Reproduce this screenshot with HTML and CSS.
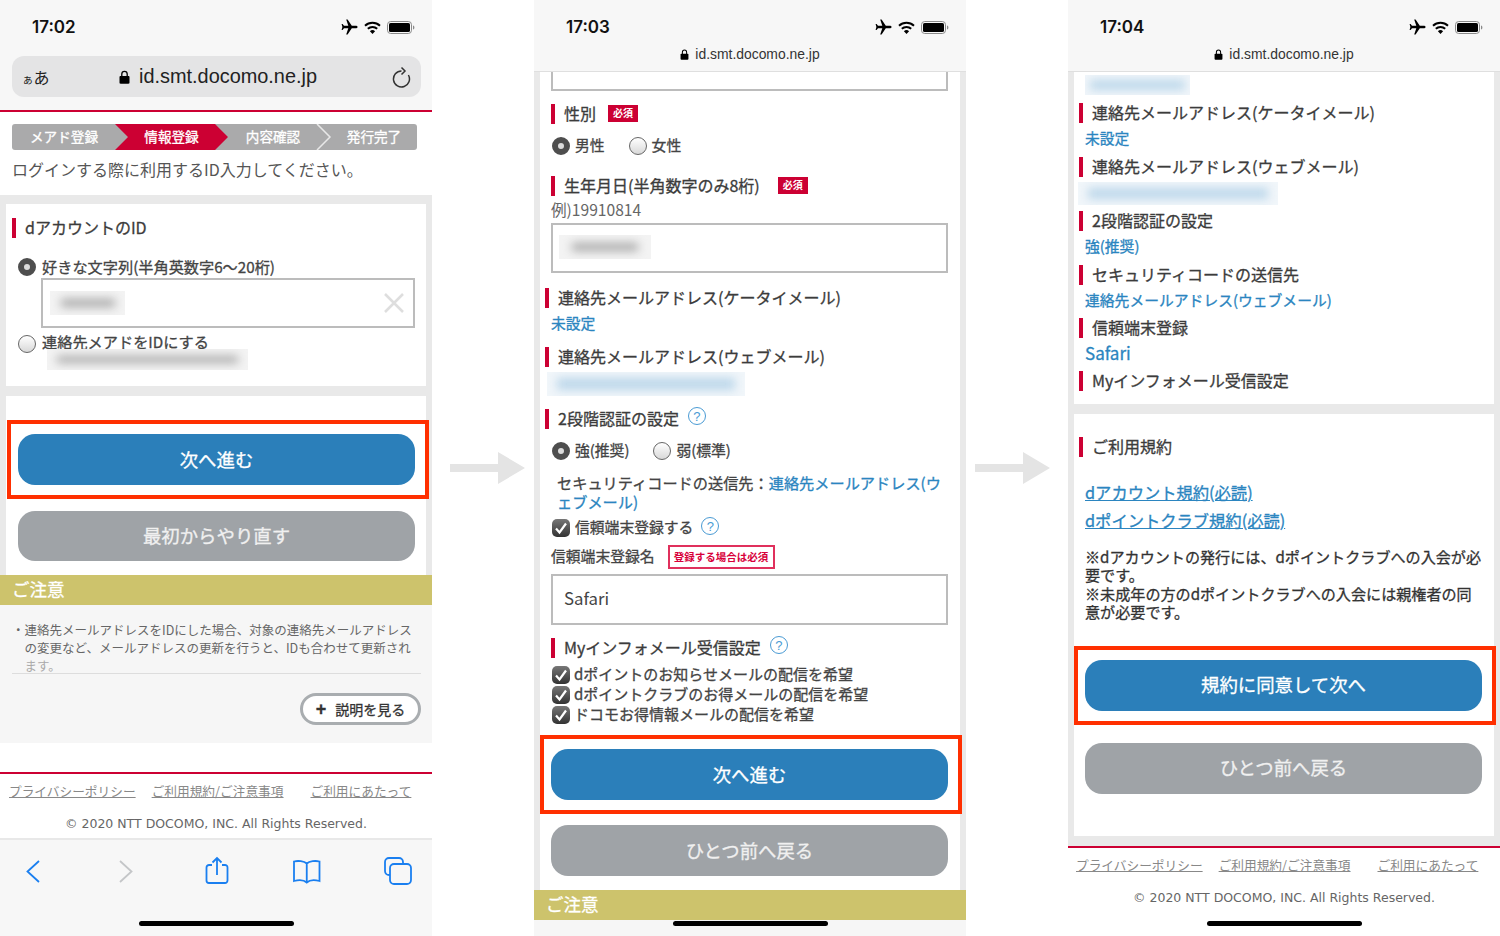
FILE: index.html
```html
<!DOCTYPE html>
<html lang="ja">
<head>
<meta charset="utf-8">
<title>dアカウント発行手順</title>
<link rel="stylesheet" href="styles.css">
</head>
<body>
<svg class="sprite" aria-hidden="true">
  <symbol id="plane" viewBox="0 0 17 16"><path d="M16.6 8c0-.8-1-1.3-2-1.3h-3.8L6.6.4H5.2l2.1 6.3H3L1.6 5H.6l.8 3-.8 3h1L3 9.3h4.3L5.2 15.6h1.4l4.2-6.3h3.8c1 0 2-.5 2-1.3z"/></symbol>
  <symbol id="wifi" viewBox="0 0 17 13"><path class="sw" d="M1 4.800a11 11 0 0 1 15 0"/><path class="sw" d="M3.800 7.800a7 7 0 0 1 9.400 0"/><path d="M8.500 13 5.900 10.200a3.800 3.800 0 0 1 5.200 0z"/></symbol>
  <symbol id="batt" viewBox="0 0 28 13"><rect class="bo" x=".5" y=".5" width="24" height="12" rx="3.200"/><rect x="2" y="2" width="21" height="9" rx="1.600"/><path class="bn" d="M26 4.500c1 .3 1.400 1 1.400 2s-.4 1.700-1.400 2z"/></symbol>
  <symbol id="lock" viewBox="0 0 11 14"><path d="M1.600 6h7.800c.7 0 1.100.4 1.100 1.100v5.400c0 .8-.4 1.200-1.100 1.200H1.600c-.7 0-1.100-.4-1.100-1.200V7.100C.5 6.400.9 6 1.600 6z"/><path class="lk" d="M2.800 6.500V4a2.700 2.700 0 0 1 5.400 0v2.500"/></symbol>
  <symbol id="tick" viewBox="0 0 18 18"><path class="tk" d="M4 9.500l3.500 4L14 4.500"/></symbol>
</svg>

<main class="stage">

  <section class="phone">
    <header class="chrome chrome-tall">
      <div class="status"><span class="time">17:02</span><span class="sicons"><svg class="i-plane"><use href="#plane"/></svg><svg class="i-wifi"><use href="#wifi"/></svg><svg class="i-batt"><use href="#batt"/></svg></span></div>
      <div class="urlbar">
        <span class="aa"><small>ぁ</small>あ</span>
        <span class="url"><svg class="i-lock-l"><use href="#lock"/></svg>id.smt.docomo.ne.jp</span>
        <svg class="i-reload" viewBox="0 0 20 22"><path d="M16.400 9A8 8 0 1 1 9.500 5"/><path d="M9.500 1.500 13 5 9.500 8.500"/></svg>
      </div>
    </header>
    <div class="steps">
      <svg class="steps-bg" viewBox="0 0 405 26"><path class="st-red" d="M103 0h100l13 13-13 13H103l13-13z"/><path class="st-sep" d="M305 0l13 13-13 13"/></svg>
      <span class="st st1">メアド登録</span><span class="st st2">情報登録</span><span class="st st3">内容確認</span><span class="st st4">発行完了</span>
    </div>
    <p class="intro">ログインする際に利用するID入力してください。</p>
    <div class="graybg gb1">
      <div class="card c1a">
        <h2 class="h mt-11">dアカウントのID</h2>
        <div class="rad mt-15"><i class="radio on"></i><span>好きな文字列(半角英数字6〜20桁)</span></div>
        <div class="input in1"><div class="blur b1"><i></i></div><svg class="i-x" viewBox="0 0 20 20"><path d="M1 1l18 18M19 1L1 19"/></svg></div>
        <div class="rad mt-5 rad2"><i class="radio"></i><span>連絡先メアドをIDにする</span></div>
        <div class="blur b2"><i></i></div>
      </div>
      <div class="card c1b">
        <div class="hl hl1"><a class="btn blue">次へ進む</a></div>
        <a class="btn grey g1">最初からやり直す</a>
      </div>
    </div>
    <div class="gold">ご注意</div>
    <div class="notice">
      <p class="ntext">・連絡先メールアドレスをIDにした場合、対象の連絡先メールアドレス<br>の変更など、メールアドレスの更新を行うと、IDも合わせて更新され<br><span class="fade">ます。</span></p>
      <div class="more-wrap"><a class="more"><b>+</b>説明を見る</a></div>
    </div>
    <div class="spacer29"></div>
    <footer class="foot foot-b">
      <div class="links"><a>プライバシーポリシー</a><a class="l2">ご利用規約/ご注意事項</a><a class="l3">ご利用にあたって</a></div>
      <p class="copy">© 2020 NTT DOCOMO, INC. All Rights Reserved.</p>
    </footer>
    <nav class="toolbar">
      <div class="tools">
        <svg viewBox="0 0 24 32"><path d="M18 6 6.500 16.500 18 27"/></svg>
        <svg class="off" viewBox="0 0 24 32"><path d="M8 6l11.500 10.500L8 27"/></svg>
        <svg viewBox="0 0 24 32"><path d="M8 10H5a2.500 2.500 0 0 0-2.500 2.500v13A2.500 2.500 0 0 0 5 28h16a2.500 2.500 0 0 0 2.500-2.500v-13A2.500 2.500 0 0 0 21 10h-3M13 20V3M8.500 7.500 13 3l4.500 4.500"/></svg>
        <svg viewBox="0 0 24 32"><path d="M11.750 8.500C9 6 3 5.500-1 6.500V26c4-1 10-1 12.750 1.500 2.750-2.500 8.750-2.500 12.750-1.500V6.500C20.500 5.500 14.500 6 11.750 8.500zM11.750 8.500V27"/></svg>
        <svg viewBox="0 0 24 32"><rect x="4" y="9" width="21" height="20" rx="4"/><path d="M4 20H3a4 4 0 0 1-4-4V7a4 4 0 0 1 4-4h10a4 4 0 0 1 4 4v2"/></svg>
      </div>
      <div class="home home34"></div>
    </nav>
  </section>

  <div class="arrow"><svg viewBox="0 0 75 32"><path d="M0 12h48V0l27 16-27 16V20H0z"/></svg></div>

  <section class="phone">
    <header class="chrome chrome-short">
      <div class="status"><span class="time">17:03</span><span class="sicons"><svg class="i-plane"><use href="#plane"/></svg><svg class="i-wifi"><use href="#wifi"/></svg><svg class="i-batt"><use href="#batt"/></svg></span></div>
      <div class="url-s"><svg class="i-lock-s"><use href="#lock"/></svg>id.smt.docomo.ne.jp</div>
    </header>
    <div class="graybg gb2">
      <div class="card c2">
        <div class="input frag"></div>
        <h2 class="h mt-10">性別<em class="req">必須</em></h2>
        <div class="rad mt-6 rh26"><i class="radio on"></i><span>男性</span><i class="radio r-gap"></i><span>女性</span></div>
        <h2 class="h mt-14">生年月日(半角数字のみ8桁)<em class="req r-far">必須</em></h2>
        <p class="eg">例)19910814</p>
        <div class="input in2 mt-3"><div class="blur b3"><i></i></div></div>
        <h2 class="h out mt-12">連絡先メールアドレス(ケータイメール)</h2>
        <p class="val">未設定</p>
        <h2 class="h out mt-7">連絡先メールアドレス(ウェブメール)</h2>
        <div class="blur blue-b b4"><i></i></div>
        <h2 class="h out mt-10">2段階認証の設定<span class="q">?</span></h2>
        <div class="rad mt-6 rh26"><i class="radio on"></i><span>強(推奨)</span><i class="radio r-gap"></i><span>弱(標準)</span></div>
        <p class="sec">セキュリティコードの送信先：<a>連絡先メールアドレス(ウ<br>ェブメール)</a></p>
        <div class="rad mt-4 rh26"><i class="check"><svg><use href="#tick"/></svg></i><span>信頼端末登録する</span><span class="q q-c">?</span></div>
        <div class="namerow"><span>信頼端末登録名</span><em class="req2">登録する場合は必須</em></div>
        <div class="input in3">Safari</div>
        <h2 class="h mt-10">Myインフォメール受信設定<span class="q">?</span></h2>
        <div class="checks">
          <div class="rad rh20"><i class="check"><svg><use href="#tick"/></svg></i><span class="ck">dポイントのお知らせメールの配信を希望</span></div>
          <div class="rad rh20"><i class="check"><svg><use href="#tick"/></svg></i><span class="ck">dポイントクラブのお得メールの配信を希望</span></div>
          <div class="rad rh20"><i class="check"><svg><use href="#tick"/></svg></i><span class="ck">ドコモお得情報メールの配信を希望</span></div>
        </div>
        <div class="hl hl2"><a class="btn blue">次へ進む</a></div>
        <a class="btn grey g2">ひとつ前へ戻る</a>
      </div>
    </div>
    <div class="gold">ご注意</div>
    <div class="strip"><div class="home"></div></div>
  </section>

  <div class="arrow arrow2"><svg viewBox="0 0 75 32"><path d="M0 12h48V0l27 16-27 16V20H0z"/></svg></div>

  <section class="phone">
    <header class="chrome chrome-short">
      <div class="status"><span class="time">17:04</span><span class="sicons"><svg class="i-plane"><use href="#plane"/></svg><svg class="i-wifi"><use href="#wifi"/></svg><svg class="i-batt"><use href="#batt"/></svg></span></div>
      <div class="url-s"><svg class="i-lock-s"><use href="#lock"/></svg>id.smt.docomo.ne.jp</div>
    </header>
    <div class="graybg gb3">
      <div class="card c3a">
        <div class="blur blue-b b5"><i></i></div>
        <h2 class="h out mt-5">連絡先メールアドレス(ケータイメール)</h2>
        <p class="val">未設定</p>
        <h2 class="h out mt-2">連絡先メールアドレス(ウェブメール)</h2>
        <div class="blur blue-b b6"><i></i></div>
        <h2 class="h out mt-3">2段階認証の設定</h2>
        <p class="val">強(推奨)</p>
        <h2 class="h out mt-2">セキュリティコードの送信先</h2>
        <p class="val">連絡先メールアドレス(ウェブメール)</p>
        <h2 class="h out mt-1">信頼端末登録</h2>
        <p class="val val-latin">Safari</p>
        <h2 class="h out mt-1">Myインフォメール受信設定</h2>
      </div>
      <div class="card c3b">
        <h2 class="h out mt-20">ご利用規約</h2>
        <a class="tl mt-20">dアカウント規約(必読)</a>
        <a class="tl mt-2">dポイントクラブ規約(必読)</a>
        <div class="terms"><p>※dアカウントの発行には、dポイントクラブへの入会が必</p><p>要です。</p><p>※未成年の方のdポイントクラブへの入会には親権者の同</p><p>意が必要です。</p></div>
        <div class="hl hl2 hl3"><a class="btn blue">規約に同意して次へ</a></div>
        <a class="btn grey g3">ひとつ前へ戻る</a>
      </div>
    </div>
    <footer class="foot foot-c">
      <div class="links"><a>プライバシーポリシー</a><a class="l2">ご利用規約/ご注意事項</a><a class="l3">ご利用にあたって</a></div>
      <p class="copy">© 2020 NTT DOCOMO, INC. All Rights Reserved.</p>
    </footer>
    <div class="home home7"></div>
  </section>

</main>
</body>
</html>
```
FILE: styles.css
```css
* { box-sizing: border-box; }
html, body { margin: 0; padding: 0; background: #fff; }
body { font-family: "Noto Sans CJK JP", "Noto Sans", sans-serif; color: #444; }
h2, p { margin: 0; font-weight: 400; }
em { font-style: normal; }
.sprite { position: absolute; width: 0; height: 0; }

.stage { display: flex; width: 1500px; height: 936px; overflow: hidden; }
.phone { width: 432px; height: 936px; flex: none; display: flex; flex-direction: column; background: #fff; overflow: hidden; }
.arrow { width: 102px; flex: none; padding: 452px 0 0 18px; }
.arrow2 { padding-left: 9px; }
.arrow svg { display: block; width: 75px; height: 32px; fill: #e4e4e4; }

/* browser chrome */
.chrome { background: #f7f7f7; flex: none; }
.chrome-tall { height: 112px; border-bottom: 2px solid #cc0033; }
.chrome-short { height: 72px; border-bottom: 1px solid #dfdfdf; }
.status { height: 54px; display: flex; justify-content: space-between; align-items: center; padding: 0 17px 0 32px; }
.time { font: 600 17px/1 Inter, Roboto, sans-serif; color: #111; }
.sicons { display: flex; align-items: center; gap: 6px; }
.i-plane { width: 17px; height: 16px; fill: #000; }
.i-wifi { width: 17px; height: 13px; fill: #000; }
.i-batt { width: 28px; height: 13px; fill: #000; }
.sw { fill: none; stroke: #000; stroke-width: 2; }
.bo { fill: none; stroke: #8a8a8a; }
.bn { fill: #8a8a8a; }
.lk { fill: none; stroke: #000; stroke-width: 1.300; }
.urlbar { height: 41px; margin: 2px 11px 0 12px; background: #e4e4e5; border-radius: 12px; display: flex; align-items: center; position: relative; padding: 0 10px; }
.aa { font-size: 16px; color: #222; width: 88px; }
.aa small { font-size: 11.500px; }
.url { font: 400 19.900px/1 "Liberation Sans", sans-serif; color: #222; display: flex; align-items: center; }
.i-lock-l { width: 11px; height: 14px; margin: 0 9px; fill: #000; }
.i-reload { position: absolute; right: 9px; top: 10px; width: 20px; height: 22px; fill: none; stroke: #333; stroke-width: 1.500; }
.url-s { height: 17px; margin-top: -8px; display: flex; justify-content: center; align-items: center; font: 400 13.900px/1 "Liberation Sans", sans-serif; color: #333; }
.i-lock-s { width: 9px; height: 11px; margin-right: 6px; fill: #000; }

/* steps */
.steps { position: relative; flex: none; display: flex; width: 405px; height: 26px; margin: 12px 0 0 12px; background: #aaaaab; border-radius: 3px; overflow: hidden; }
.steps-bg { position: absolute; left: 0; top: 0; width: 405px; height: 26px; }
.st-red { fill: #cc0033; }
.st-sep { fill: none; stroke: #e8e8e8; stroke-width: 1.500; }
.st { position: relative; text-align: center; font-size: 13.600px; line-height: 25px; color: #fff; white-space: nowrap; }
.st1 { width: 104px; }
.st2 { width: 87px; margin-left: 12px; }
.st3 { width: 116px; }
.st4 { width: 86px; }
.intro { flex: none; height: 45px; padding-left: 12px; font-size: 16px; line-height: 39px; color: #555; white-space: nowrap; }

/* medium weight look, the CJK family has only regular and bold here */
.h, .rad, .val, .btn, .sec, .terms, .tl, .namerow, .gold, .st, .more { -webkit-text-stroke: .3px currentColor; }

/* gray page + cards */
.graybg { background: #e9e9e9; flex: none; padding: 0 6px; }
.gb1 { padding-top: 9px; height: 380px; }
.gb2 { height: 818px; }
.gb3 { height: 774px; }
.card { display: flow-root; background: #fff; padding: 0 12px 0 11px; }
.c1a { height: 182px; padding-left: 6px; }
.c1b { height: 179px; margin-top: 10px; padding: 24px 0 0 11px; }
.c2 { height: 818px; }
.c3a { height: 332px; }
.c3b { height: 422px; margin-top: 10px; }

.h { display: flex; align-items: center; height: 26px; padding-bottom: 2px; font-size: 16px; font-weight: 400; color: #3c3c3c; white-space: nowrap; }
.h::before { content: ""; flex: none; width: 4px; height: 20px; margin: 2px 9px 0 0; background: #cc0033; }
.out { margin-left: -6px; }
.mt-1 { margin-top: 1px; }
.mt-2 { margin-top: 2px; }
.mt-3 { margin-top: 3px; }
.mt-4 { margin-top: 4px; }
.mt-5 { margin-top: 5px; }
.mt-6 { margin-top: 6px; }
.mt-7 { margin-top: 7px; }
.mt-10 { margin-top: 10px; }
.mt-11 { margin-top: 11px; }
.mt-12 { margin-top: 12px; }
.mt-14 { margin-top: 14px; }
.mt-15 { margin-top: 15px; }
.mt-20 { margin-top: 20px; }

/* controls */
.rad { display: flex; align-items: center; height: 22px; font-size: 14.800px; color: #444; white-space: nowrap; }
.rh26 { height: 26px; }
.rh20 { height: 20px; }
.rad > span { margin-left: 5px; padding-bottom: 3px; }
.c1a .rad { margin-left: 6px; font-size: 15.200px; }
.c1a .rad > span { margin-left: 6px; }
.rad2 span { margin-top: -4px; }
.radio { flex: none; display: block; width: 18px; height: 18px; margin-left: 1px; border-radius: 50%; border: 1px solid #666; background: linear-gradient(#fff, #d8d8d8); }
.radio.on { border: 6px solid #4e4e4e; background: #dcdcdc; }
.c1a .radio { margin-left: 0; }
.r-gap { margin-left: 24px; }
.check { flex: none; display: block; width: 18px; height: 18px; margin-left: 1px; border-radius: 5px; background: linear-gradient(#777, #333); }
.check svg { display: block; width: 18px; height: 18px; }
.tk { fill: none; stroke: #fff; stroke-width: 2.200; }
.rad > .ck { margin-left: 4px; font-size: 15px; }
.q { display: inline-flex; align-items: center; justify-content: center; width: 18px; height: 18px; margin: -4px 0 0 9px; border-radius: 50%; border: 1.500px solid #4a9bd4; color: #4a9bd4; font: 400 13px/1 "Liberation Sans", sans-serif; -webkit-text-stroke: 0; }
.rad > .q-c { margin-left: 8px; padding-bottom: 0; }
.req { display: inline-block; margin-left: 12px; width: 30px; height: 17px; background: #cc0033; color: #fff; font-size: 10px; line-height: 16px; text-align: center; font-weight: 700; -webkit-text-stroke: 0; }
.r-far { margin-left: 18px; }
.req2 { display: inline-block; margin-left: 13px; width: 107px; height: 24px; border: 2px solid #e0305c; color: #d8003a; font-size: 10.500px; line-height: 19px; text-align: center; font-weight: 700; -webkit-text-stroke: 0; }
.namerow { display: flex; align-items: center; height: 24px; margin-top: 4px; font-size: 14.800px; color: #444; white-space: nowrap; }
.namerow > span { padding-bottom: 3px; }
.input { border: 2px solid #bcbcbc; background: #fff; }
.frag { height: 19px; border-top: 0; }
.in1 { display: flex; align-items: center; justify-content: space-between; width: 374px; height: 50px; margin-left: 29px; padding: 0 9px 0 7px; }
.in2 { height: 50px; padding: 10px 0 0 6px; }
.in3 { height: 51px; margin-top: 5px; padding-left: 11px; font-size: 16.800px; line-height: 45px; color: #444; }
.i-x { width: 20px; height: 20px; fill: none; stroke: #dedede; stroke-width: 2.500; }
.eg { height: 20px; margin-top: 1px; font-size: 15.600px; line-height: 18px; color: #666; }
.val { height: 26px; font-size: 14.800px; line-height: 24px; color: #2b85c0; white-space: nowrap; }
.val-latin { font-size: 17px; }
.sec { margin-top: 9px; padding-left: 6px; font-size: 15.200px; line-height: 19px; color: #444; white-space: nowrap; }
.sec a { color: #2b85c0; }
.checks { margin-top: 4px; }

/* blurred values */
.blur { display: flex; align-items: center; justify-content: center; overflow: hidden; background: #f3f3f3; }
.blur i { display: block; width: 72%; height: 32%; background: #a8a8a8; filter: blur(5px); }
.blue-b { background: #f1f6fa; }
.blue-b i { width: 90%; height: 50%; background: #bcd7ea; }
.b1 { width: 75px; height: 24px; }
.b2 { position: relative; width: 201px; height: 21px; margin: -6px 0 0 35px; }
.b2 i { width: 90%; }
.b3 { width: 92px; height: 24px; }
.b4 { width: 198px; height: 24px; margin: 2px 0 0 -4px; }
.b5 { width: 105px; height: 20px; margin-top: 3px; }
.b6 { width: 200px; height: 23px; margin: 2px 0 3px -7px; }

/* buttons */
.btn { display: flex; align-items: center; justify-content: center; width: 397px; height: 51px; padding-bottom: 2px; border-radius: 17px; font-size: 18.400px; white-space: nowrap; }
.blue { background: #2b7fba; color: #fff; }
.grey { background: #9fa3a7; color: #f0f0f0; }
.hl { width: 422px; border: 4px solid #ff2f00; padding: 10px 7px; background: #fff; }
.hl1 { margin-left: -10px; }
.hl2 { margin: 10px 0 0 -11px; }
.hl3 { margin-top: 25px; }
.g1 { margin: 12px 0 0 1px; height: 50px; }
.g2 { margin-top: 11px; }
.g3 { margin-top: 18px; }
.tl { display: block; height: 26px; font-size: 16.300px; line-height: 25px; color: #2b85c0; text-decoration: underline; white-space: nowrap; }
.terms { margin-top: 13px; font-size: 15.100px; color: #333; white-space: nowrap; }
.terms p { height: 18.400px; line-height: 18.400px; overflow: visible; }

/* notice */
.gold { flex: none; height: 30px; padding-left: 12px; background: #cdc36c; color: #fff; font-size: 17.500px; line-height: 28px; }
.notice { flex: none; height: 138px; background: #f6f6f6; }
.ntext { height: 69px; margin: 0 11px 0 12px; padding: 16px 0 0 12.500px; border-bottom: 1px solid #ddd; text-indent: -12.500px; font-size: 12.500px; line-height: 18.200px; color: #666; white-space: nowrap; }
.fade { color: #aaa; }
.more-wrap { display: flex; justify-content: flex-end; padding: 19px 11px 0 0; }
.more { display: flex; align-items: center; justify-content: center; width: 121px; height: 32px; border: 3px solid #a9adb0; border-radius: 16px; background: #fff; color: #333; font-size: 14px; white-space: nowrap; }
.more b { margin-right: 9px; font: 700 18px/1 "Liberation Sans", sans-serif; }
.spacer29 { flex: none; height: 29px; }

/* footer */
.foot { flex: none; border-top: 2px solid #cc0033; background: #fff; }
.foot-b { height: 68px; border-bottom: 2px solid #e8e8e8; }
.foot-c { height: 68px; }
.links { display: flex; height: 34px; padding: 0 0 2px 9px; align-items: center; font-size: 12.700px; color: #888; white-space: nowrap; }
.foot-c .links { padding-left: 8px; }
.links a { text-decoration: underline; }
.l2 { margin-left: 16px; }
.l3 { margin-left: 27px; }
.copy { height: 32px; font: 400 12.500px/32px "DejaVu Sans", sans-serif; color: #666; text-align: center; white-space: nowrap; }

/* toolbar */
.toolbar { flex: none; height: 96px; background: #f7f7f7; padding-top: 15px; }
.tools { display: flex; justify-content: space-between; height: 32px; padding: 0 22px 0 21px; }
.tools svg { width: 24px; height: 32px; fill: none; stroke: #1a7ff0; stroke-width: 1.800; overflow: visible; }
.tools svg.off { stroke: #c4c6c8; }
.home { width: 155px; height: 5px; margin: 0 auto; border-radius: 3px; background: #000; }
.home34 { margin-top: 34px; }
.home7 { margin-top: 7px; }
.strip { flex: none; height: 16px; padding-top: 1px; background: #f6f6f6; }
```
